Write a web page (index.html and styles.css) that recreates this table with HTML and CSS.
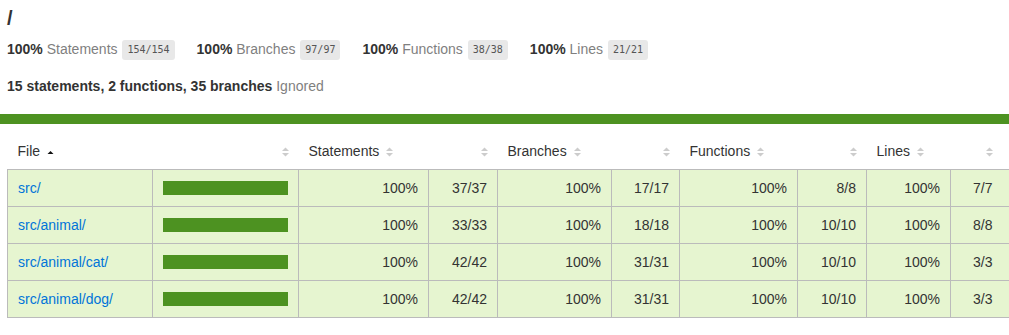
FILE: index.html
```html
<!DOCTYPE html>
<html>
<head>
<meta charset="utf-8">
<title>Code coverage report for All files</title>
<link rel="stylesheet" href="styles.css">
</head>
<body>
<div class="wrapper">
  <div class="pad">
    <h1 class="title">/</h1>
    <div class="stats">
      <div class="stat"><span class="strong">100%</span> <span class="quiet">Statements</span> <span class="fraction">154/154</span></div>
      <div class="stat"><span class="strong">100%</span> <span class="quiet">Branches</span> <span class="fraction">97/97</span></div>
      <div class="stat"><span class="strong">100%</span> <span class="quiet">Functions</span> <span class="fraction">38/38</span></div>
      <div class="stat"><span class="strong">100%</span> <span class="quiet">Lines</span> <span class="fraction">21/21</span></div>
    </div>
    <p class="ignored"><span class="strong">15 statements, 2 functions, 35 branches</span> <span class="quiet">Ignored</span></p>
  </div>
  <div class="status-line"></div>
  <div class="table-wrap">
    <table class="coverage-summary">
      <colgroup>
        <col class="c-file"><col class="c-pic"><col class="c-pct-s"><col class="c-abs-s"><col class="c-pct-b"><col class="c-abs-b"><col class="c-pct-f"><col class="c-abs-f"><col class="c-pct-l"><col class="c-abs-l">
      </colgroup>
      <thead>
        <tr>
          <th class="file">File<span class="sorter"><svg width="7" height="10" viewBox="0 0 7 10"><polygon points="0.5,7 6.5,7 3.5,4" fill="#111"/></svg></span></th>
          <th class="pic"><span class="sorter"><svg width="7" height="10" viewBox="0 0 7 10"><polygon points="0,4 7,4 3.5,0.5" fill="#ccc"/><polygon points="0,6 7,6 3.5,9.5" fill="#ccc"/></svg></span></th>
          <th class="pct">Statements<span class="sorter"><svg width="7" height="10" viewBox="0 0 7 10"><polygon points="0,4 7,4 3.5,0.5" fill="#ccc"/><polygon points="0,6 7,6 3.5,9.5" fill="#ccc"/></svg></span></th>
          <th class="abs"><span class="sorter"><svg width="7" height="10" viewBox="0 0 7 10"><polygon points="0,4 7,4 3.5,0.5" fill="#ccc"/><polygon points="0,6 7,6 3.5,9.5" fill="#ccc"/></svg></span></th>
          <th class="pct">Branches<span class="sorter"><svg width="7" height="10" viewBox="0 0 7 10"><polygon points="0,4 7,4 3.5,0.5" fill="#ccc"/><polygon points="0,6 7,6 3.5,9.5" fill="#ccc"/></svg></span></th>
          <th class="abs"><span class="sorter"><svg width="7" height="10" viewBox="0 0 7 10"><polygon points="0,4 7,4 3.5,0.5" fill="#ccc"/><polygon points="0,6 7,6 3.5,9.5" fill="#ccc"/></svg></span></th>
          <th class="pct">Functions<span class="sorter"><svg width="7" height="10" viewBox="0 0 7 10"><polygon points="0,4 7,4 3.5,0.5" fill="#ccc"/><polygon points="0,6 7,6 3.5,9.5" fill="#ccc"/></svg></span></th>
          <th class="abs"><span class="sorter"><svg width="7" height="10" viewBox="0 0 7 10"><polygon points="0,4 7,4 3.5,0.5" fill="#ccc"/><polygon points="0,6 7,6 3.5,9.5" fill="#ccc"/></svg></span></th>
          <th class="pct">Lines<span class="sorter"><svg width="7" height="10" viewBox="0 0 7 10"><polygon points="0,4 7,4 3.5,0.5" fill="#ccc"/><polygon points="0,6 7,6 3.5,9.5" fill="#ccc"/></svg></span></th>
          <th class="abs last"><span class="sorter"><svg width="7" height="10" viewBox="0 0 7 10"><polygon points="0,4 7,4 3.5,0.5" fill="#ccc"/><polygon points="0,6 7,6 3.5,9.5" fill="#ccc"/></svg></span></th>
        </tr>
      </thead>
      <tbody>
        <tr class="high">
          <td class="file"><a href="#">src/</a></td>
          <td class="pic"><div class="chart"><div class="cover-fill"></div></div></td>
          <td class="pct">100%</td><td class="abs">37/37</td>
          <td class="pct">100%</td><td class="abs">17/17</td>
          <td class="pct">100%</td><td class="abs">8/8</td>
          <td class="pct">100%</td><td class="abs last">7/7</td>
        </tr>
        <tr class="high">
          <td class="file"><a href="#">src/animal/</a></td>
          <td class="pic"><div class="chart"><div class="cover-fill"></div></div></td>
          <td class="pct">100%</td><td class="abs">33/33</td>
          <td class="pct">100%</td><td class="abs">18/18</td>
          <td class="pct">100%</td><td class="abs">10/10</td>
          <td class="pct">100%</td><td class="abs last">8/8</td>
        </tr>
        <tr class="high">
          <td class="file"><a href="#">src/animal/cat/</a></td>
          <td class="pic"><div class="chart"><div class="cover-fill"></div></div></td>
          <td class="pct">100%</td><td class="abs">42/42</td>
          <td class="pct">100%</td><td class="abs">31/31</td>
          <td class="pct">100%</td><td class="abs">10/10</td>
          <td class="pct">100%</td><td class="abs last">3/3</td>
        </tr>
        <tr class="high">
          <td class="file"><a href="#">src/animal/dog/</a></td>
          <td class="pic"><div class="chart"><div class="cover-fill"></div></div></td>
          <td class="pct">100%</td><td class="abs">42/42</td>
          <td class="pct">100%</td><td class="abs">31/31</td>
          <td class="pct">100%</td><td class="abs">10/10</td>
          <td class="pct">100%</td><td class="abs last">3/3</td>
        </tr>
      </tbody>
    </table>
  </div>
</div>
</body>
</html>
```

FILE: styles.css
```css
html, body {
  margin: 0;
  padding: 0;
}
body {
  font-family: "Liberation Sans", Arial, Helvetica, sans-serif;
  font-size: 14px;
  color: #333;
  background: #fff;
  overflow: hidden;
}
.wrapper {
  overflow: hidden;
}
.pad {
  padding: 8px 7px 0 7px;
}
.title {
  margin: 0;
  font-size: 20px;
  line-height: 20px;
  font-weight: bold;
  color: #333;
}
.stats {
  display: flex;
  align-items: center;
  margin-top: 12px;
  height: 20px;
}
.stat {
  margin-right: 22px;
  white-space: nowrap;
  line-height: 20px;
}
.strong {
  font-weight: bold;
}
.quiet {
  color: #7f7f7f;
}
.fraction {
  font-family: "DejaVu Sans Mono", "Liberation Mono", monospace;
  font-size: 10px;
  line-height: 12px;
  color: #555;
  background: #e8e8e8;
  padding: 4px 5px;
  border-radius: 3px;
  display: inline-block;
  vertical-align: middle;
  margin-left: 1px;
  position: relative;
  top: -1px;
}
.ignored {
  margin: 16px 0 0 0;
  line-height: 20px;
}
.status-line {
  height: 10px;
  background: #4d9221;
  margin-top: 18px;
}
.table-wrap {
  padding-left: 7px;
  margin-top: 9px;
}
.coverage-summary {
  border-collapse: collapse;
  table-layout: fixed;
  width: 1005px;
}
.c-file { width: 145px; }
.c-pic { width: 146px; }
.c-pct-s { width: 130px; }
.c-abs-s { width: 69px; }
.c-pct-b { width: 114px; }
.c-abs-b { width: 68px; }
.c-pct-f { width: 118px; }
.c-abs-f { width: 69px; }
.c-pct-l { width: 84px; }
.c-abs-l { width: 62px; }
.coverage-summary tr {
  border-bottom: 1px solid #bbb;
}
.coverage-summary th,
.coverage-summary td {
  padding: 10px;
  line-height: 16px;
  white-space: nowrap;
}
.coverage-summary th {
  text-align: left;
  font-weight: normal;
  color: #333;
}
.coverage-summary td {
  border-right: 1px solid #bbb;
}
.coverage-summary td:first-child {
  border-left: 1px solid #bbb;
}
.coverage-summary td.last {
  border-right: none;
}
.coverage-summary th.pic,
.coverage-summary th.abs,
.coverage-summary td.pct,
.coverage-summary td.abs {
  text-align: right;
}
.coverage-summary th.last,
.coverage-summary td.last {
  padding-right: 20px;
}
.sorter {
  display: inline-block;
  width: 7px;
  height: 10px;
  margin-left: 7px;
  vertical-align: -1px;
}
.sorter svg {
  display: block;
}
.high td,
tr.high {
  background: #e6f5d0;
}
.coverage-summary a {
  color: #0074d9;
  text-decoration: none;
}
.chart {
  line-height: 0;
  height: 14px;
}
.cover-fill {
  display: block;
  width: 100%;
  height: 14px;
  background: #4d9221;
}
```
